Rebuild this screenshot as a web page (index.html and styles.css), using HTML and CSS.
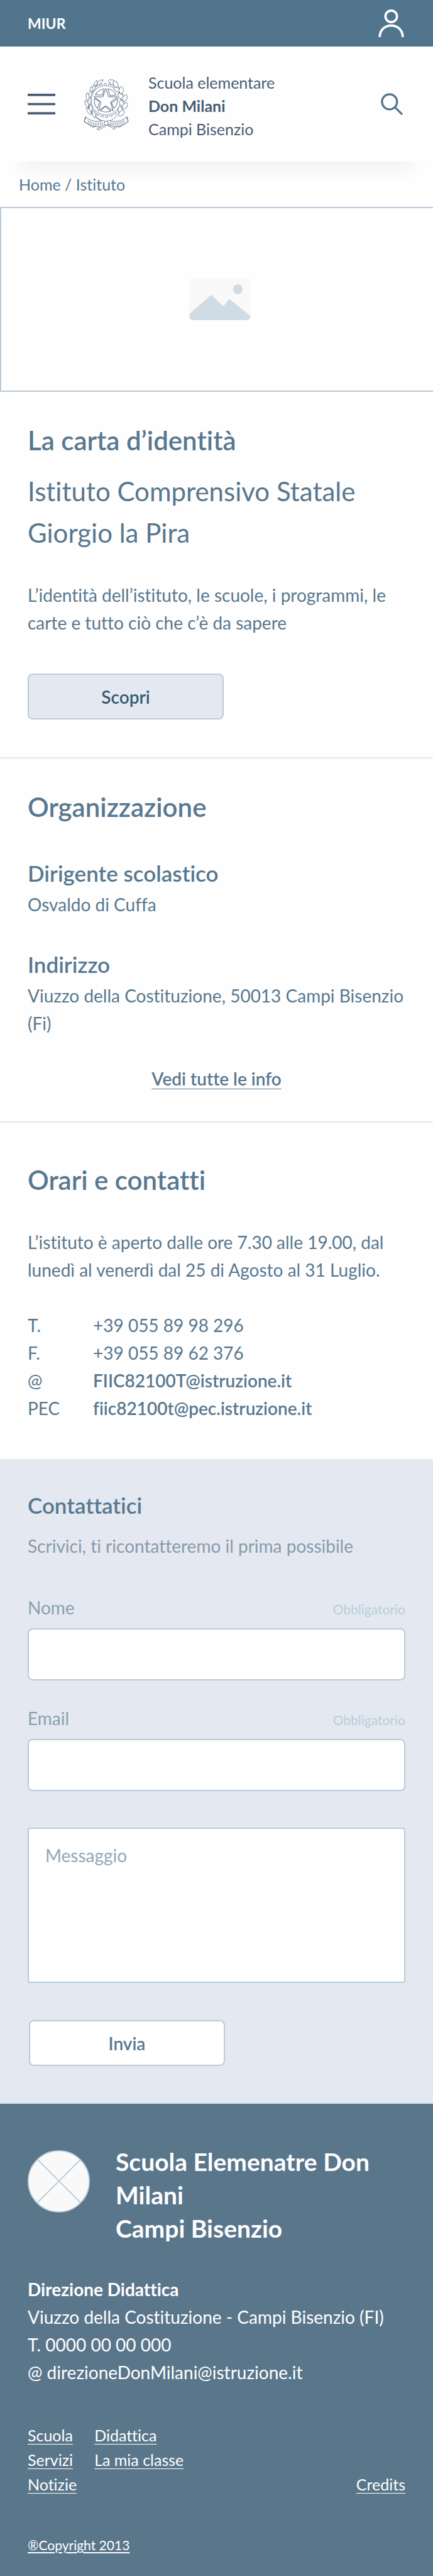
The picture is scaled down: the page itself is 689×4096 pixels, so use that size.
FILE: index.html
```
<!DOCTYPE html>
<html lang="it">
<head>
<meta charset="utf-8">
<meta name="viewport" content="width=device-width, initial-scale=1">
<title>Don Milani – Istituto</title>
<link rel="stylesheet" href="styles.css">
</head>
<body>
<div class="topbar">
  <a class="topbar-brand" href="#">MIUR</a>
  <button class="icon-button" type="button" aria-label="Area personale">
    <svg class="icon-user" viewBox="0 0 44 48" fill="none" stroke="currentColor" stroke-width="4"><circle cx="22" cy="12" r="10"/><path d="M2 48C2 36 10.500 28 22 28S42 36 42 48"/></svg>
  </button>
</div>

<header class="header">
  <button class="icon-button" type="button" aria-label="Menu">
    <svg class="icon-menu" viewBox="0 0 48 36" fill="currentColor"><path d="M0 0h48v4H0zM0 16h48v4H0zM0 32h48v4H0z"/></svg>
  </button>
  <svg class="emblem" viewBox="0 0 80 90" fill="none" stroke="currentColor" stroke-width=".8" aria-hidden="true">
    <defs>
      <path id="leaf" d="M0 0C-3.500-3.500-3.500-9 0-14C3.500-9 3.500-3.500 0 0Z"/>
      <path id="oak" d="M0 0C-3-.5-4-2.500-2.500-4C-5-5-4.500-8-2.500-8C-3.500-10.500-1.500-12 0-12C1.500-12 3.500-10.500 2.500-8C4.500-8 5-5 2.500-4C4-2.500 3-.5 0 0Z"/>
      <path id="wedge" d="M42.800 18.500A20 20 0 0 1 57 29.500L46.500 30.500Z"/>
    </defs>
    <circle cx="39.300" cy="38.500" r="27.500" stroke-width="4" stroke-dasharray="4.500 3.354"/>
    <circle cx="39.300" cy="38.500" r="27" stroke="#fff" stroke-width="3.600" stroke-dasharray="3.100 4.612" stroke-dashoffset="-.7"/>
    <circle cx="39.300" cy="38.500" r="25.300" stroke-width=".6"/>
    <g stroke-width="1">
      <path d="M39.300 18L44.200 32.500H59.800L47.300 41.500L52.200 57L39.300 47.700L26.400 57L31.300 41.500L18.800 32.500H34.400Z"/>
      <use href="#wedge"/>
      <use href="#wedge" transform="rotate(72 39.300 38.500)"/>
      <use href="#wedge" transform="rotate(144 39.300 38.500)"/>
      <use href="#wedge" transform="rotate(216 39.300 38.500)"/>
      <use href="#wedge" transform="rotate(288 39.300 38.500)"/>
    </g>
    <path stroke-width="1.400" d="M30 6C13 16 6 34 10 50C13 60 22 69 36 76"/>
    <path d="M49 6C66 16 73 34 69 50C66 60 57 69 43 76"/>
    <g fill="#fff">
      <use href="#leaf" transform="translate(24 12) rotate(50)"/>
      <use href="#leaf" transform="translate(19 17) rotate(22)"/>
      <use href="#leaf" transform="translate(15 24) rotate(30)"/>
      <use href="#leaf" transform="translate(14 28) rotate(4)"/>
      <use href="#leaf" transform="translate(10 35) rotate(20)"/>
      <use href="#leaf" transform="translate(9 39) rotate(-8)"/>
      <use href="#leaf" transform="translate(10 47) rotate(10)"/>
      <use href="#leaf" transform="translate(9 51) rotate(-22)"/>
      <use href="#leaf" transform="translate(13 59) rotate(2)"/>
      <use href="#leaf" transform="translate(14 63) rotate(-34)"/>
      <use href="#leaf" transform="translate(21 69) rotate(-18)"/>
    </g>
    <g fill="#fff">
      <use href="#oak" transform="translate(55 10) rotate(-60)"/>
      <use href="#oak" transform="translate(59 16) rotate(-28)"/>
      <use href="#oak" transform="translate(64 23) rotate(-60)"/>
      <use href="#oak" transform="translate(66 27) rotate(0)"/>
      <use href="#oak" transform="translate(69 36) rotate(-40)"/>
      <use href="#oak" transform="translate(70 40) rotate(22)"/>
      <use href="#oak" transform="translate(70 49) rotate(-30)"/>
      <use href="#oak" transform="translate(69 53) rotate(34)"/>
      <use href="#oak" transform="translate(65 61) rotate(-8)"/>
      <use href="#oak" transform="translate(62 65) rotate(45)"/>
    </g>
    <g fill="#fff" stroke-width=".9">
      <path d="M5 67L2 75L17 85L22 83M4 67C14 75 25 77 36 73L40 77L36 83C24 86 12 83 2 75Z"/>
      <path d="M75 67L78 75L63 85L58 83M76 67C66 75 55 77 44 73L40 77L44 83C56 86 68 83 78 75Z"/>
      <path d="M38 80L24 88L27 90L42 81ZM42 80L54 89L56 86L45 80Z"/>
      <circle cx="40" cy="78" r="3.500"/>
    </g>
    <path stroke-width=".8" d="M9 73v5M12 74.500v5M15 75.500v5M18 76.500v5M21 77v5M24 77v5M27 77v5M30 76.500v5M33 76v5M47 76v5M50 76.500v5M53 77v5M56 77v5M59 76.500v5M62 76v5M65 75v5M68 74v5M71 72.500v5"/>
  </svg>
  <p class="school">Scuola elementare<br><b>Don Milani</b><br>Campi Bisenzio</p>
  <button class="icon-button header-search" type="button" aria-label="Cerca">
    <svg class="icon-search" viewBox="0 0 38 38" fill="none" stroke="currentColor" stroke-width="3.500" stroke-linecap="round"><circle cx="15" cy="15" r="13"/><path d="M24.500 24.500L36 36"/></svg>
  </button>
</header>

<nav class="breadcrumb" aria-label="Percorso"><a href="#">Home</a> / <a href="#">Istituto</a></nav>

<div class="cover">
  <svg class="cover-icon" viewBox="0 0 106 72" aria-hidden="true"><rect width="106" height="72" rx="6" fill="#f9f9f9"/><path d="M0 61L38 28L59 48L69 35L106 65Q105 72 100 72H6Q0 71 0 66Z" fill="#d0dce5"/><circle cx="84" cy="18.500" r="8.500" fill="#d0dce5"/></svg>
</div>

<main>
  <section class="section">
    <h1 class="title">La carta d’identità</h1>
    <p class="lead">Istituto Comprensivo Statale Giorgio la Pira</p>
    <p class="intro">L’identità dell’istituto, le scuole, i programmi, le carte e tutto ciò che c’è da sapere</p>
    <button class="button button-soft" type="button">Scopri</button>
  </section>

  <section class="section section-organization">
    <h2 class="title">Organizzazione</h2>
    <div class="entry entry-first">
      <h3 class="subtitle">Dirigente scolastico</h3>
      <p>Osvaldo di Cuffa</p>
    </div>
    <div class="entry">
      <h3 class="subtitle">Indirizzo</h3>
      <p>Viuzzo della Costituzione, 50013 Campi Bisenzio (Fi)</p>
    </div>
    <p class="more"><a href="#">Vedi tutte le info</a></p>
  </section>

  <section class="section section-hours">
    <h2 class="title">Orari e contatti</h2>
    <p class="hours">L’istituto è aperto dalle ore 7.30 alle 19.00, dal lunedì al venerdì dal 25 di Agosto al 31 Luglio.</p>
    <dl class="contacts">
      <dt>T.</dt><dd>+39 055 89 98 296</dd>
      <dt>F.</dt><dd>+39 055 89 62 376</dd>
      <dt>@</dt><dd><a href="#">FIIC82100T@istruzione.it</a></dd>
      <dt>PEC</dt><dd><a href="#">fiic82100t@pec.istruzione.it</a></dd>
    </dl>
  </section>

  <form class="contact-form">
    <h2 class="subtitle">Contattatici</h2>
    <p class="form-intro">Scrivici, ti ricontatteremo il prima possibile</p>
    <div class="field">
      <div class="field-head"><label for="nome">Nome</label><span class="required">Obbligatorio</span></div>
      <input class="input" id="nome" type="text">
    </div>
    <div class="field">
      <div class="field-head"><label for="email">Email</label><span class="required">Obbligatorio</span></div>
      <input class="input" id="email" type="email">
    </div>
    <textarea class="message" aria-label="Messaggio" placeholder="Messaggio"></textarea>
    <button class="button button-white" type="button">Invia</button>
  </form>
</main>

<footer class="footer">
  <div class="footer-brand">
    <svg class="footer-logo" viewBox="0 0 108 108" fill="none" stroke="#b9cbd9" stroke-width="2" aria-hidden="true"><circle cx="54" cy="54" r="53" fill="#f9f9f9"/><path d="M17 16L92 91M92 16L17 91"/></svg>
    <p class="footer-title">Scuola Elemenatre Don Milani<br>Campi Bisenzio</p>
  </div>
  <address class="address"><b>Direzione Didattica</b><br>Viuzzo della Costituzione - Campi Bisenzio (FI)<br>T. 0000 00 00 000<br>@ direzioneDonMilani@istruzione.it</address>
  <nav class="footer-nav" aria-label="Collegamenti">
    <ul class="link-list"><li><a href="#">Scuola</a></li><li><a href="#">Servizi</a></li><li><a href="#">Notizie</a></li></ul>
    <ul class="link-list"><li><a href="#">Didattica</a></li><li><a href="#">La mia classe</a></li></ul>
    <a class="credits" href="#">Credits</a>
  </nav>
  <p class="copyright"><a href="#">®Copyright 2013</a></p>
</footer>
</body>
</html>
```
FILE: styles.css
```
* { box-sizing: border-box; }

body {
  margin: 0;
  background: #fefefe;
  color: #587890;
  font: 400 28px/44px Lato, "Open Sans", sans-serif;
  font-variant-ligatures: none;
}

h1, h2, h3, p, ul, dl, dd { margin: 0; padding: 0; font-weight: 400; }
ul { list-style: none; }
a { color: inherit; text-decoration: none; }
svg { display: block; }

.icon-button {
  padding: 0;
  border: 0;
  background: none;
  color: inherit;
}

.topbar {
  display: flex;
  justify-content: space-between;
  align-items: center;
  height: 74px;
  padding: 0 46px 0 44px;
  background: #51758d;
  color: #fff;
}
.topbar-brand { font-size: 23px; font-weight: 700; }
.icon-user { width: 41px; height: 44px; }

.header {
  display: flex;
  align-items: center;
  height: 183px;
  padding: 0 48px 0 44px;
  background: #fefefe;
  color: #475d75;
  box-shadow: 0 42px 30px -34px #ededed;
}
.icon-menu { width: 44px; height: 33px; }
.emblem { width: 74px; height: 83px; margin: 0 30px 0 44px; color: #4d6279; }
.school { padding-top: 5px; font-size: 25px; line-height: 37px; }
.header-search { margin-left: auto; color: #51758d; }
.icon-search { width: 35px; height: 35px; }

.breadcrumb {
  position: relative;
  padding: 18px 30px 17px;
  font-size: 25px;
  line-height: 37px;
}

.cover {
  display: flex;
  justify-content: center;
  align-items: center;
  height: 294px;
  padding-left: 8px;
  border: 2px solid #bacbd9;
  border-right: 0;
}
.cover-icon { width: 98px; height: 66px; }

.section { padding: 52px 44px 60px; }
.section-organization {
  padding-bottom: 46px;
  border: solid #e4e9f0;
  border-width: 2px 0;
}
.section-hours { padding-top: 66px; padding-bottom: 59px; }

.title { font-size: 42px; line-height: 50px; font-weight: 600; }
.subtitle { font-size: 35px; line-height: 44px; font-weight: 600; }
.lead { margin-top: 23px; font-size: 42px; line-height: 66px; }
.intro { margin-top: 44px; }

.button {
  display: block;
  width: 312px;
  height: 73px;
  border: 2px solid #b9cbd9;
  border-radius: 8px;
  font: inherit;
  font-weight: 600;
}
.button-soft { margin-top: 59px; background: #e4e9f1; color: #375a74; }
.button-white { margin: 59px 0 0 2px; background: #fff; color: #587890; }

.entry { margin-top: 51px; }
.entry-first { margin-top: 58px; }
.entry p { margin-top: 6px; }
.more { margin-top: 44px; text-align: center; }
.more a {
  font-weight: 600;
  text-decoration: underline 1px;
  text-underline-offset: 5px;
}

.hours { margin-top: 52px; }
.contacts { display: grid; grid-template-columns: 104px 1fr; margin-top: 44px; }
.contacts a { font-weight: 600; }

.contact-form { padding: 51px 44px 60px; background: #e4e9f1; }
.form-intro { margin: 21px 0 54px; color: #8a9aaa; }
.field { margin-bottom: 38px; }
.field-head {
  display: flex;
  justify-content: space-between;
  align-items: baseline;
  height: 44px;
  margin-bottom: 11px;
  color: #8aa0b1;
}
.required { color: #b9cddb; font-size: 21px; line-height: 32px; }
.input, .message {
  display: block;
  width: 100%;
  border: 2px solid #b9cbd9;
  background: #fff;
  color: #587890;
  font: inherit;
}
.input { height: 83px; padding: 0 26px; border-radius: 8px; }
.message {
  height: 247px;
  margin-top: 58px;
  padding: 20px 26px;
  border-radius: 4px;
  resize: none;
}
.message::placeholder { color: #93a8b8; opacity: 1; }

.footer { padding: 66px 44px 31px; background: #5a768b; color: #fff; }
.footer-brand { display: flex; align-items: flex-start; gap: 41px; }
.footer-logo { flex: none; width: 99px; height: 99px; margin-top: 8px; }
.footer-title { max-width: 430px; font-size: 39px; line-height: 53px; font-weight: 700; }
.address { margin-top: 48px; font-style: normal; }
.footer-nav {
  display: flex;
  gap: 28px;
  margin-top: 59px;
  font-size: 25px;
  line-height: 39px;
}
.footer-nav a { text-decoration: underline 1px; text-underline-offset: 4px; text-decoration-skip-ink: none; }
.credits { align-self: flex-end; margin-left: auto; }
.copyright { margin-top: 57px; font-size: 21px; line-height: 39px; }
.copyright a { text-decoration: underline 2px; text-underline-offset: 3px; }
```
